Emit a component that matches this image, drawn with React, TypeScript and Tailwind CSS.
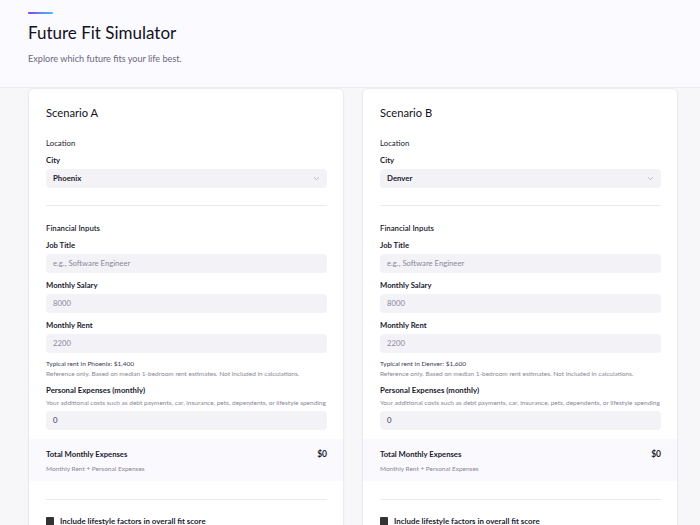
import React from "react";

function Field({ label, value, placeholder }: { label: string; value?: string; placeholder?: string }) {
  return (
    <div className="flex flex-col">
      <div className="text-[7.7px] font-bold text-[#1a1a2e] leading-[10px]">{label}</div>
      <div className="mt-[4px] h-[19px] rounded-[4px] bg-[#f3f2f7] flex items-center px-[7px] text-[7.7px] text-[#8a8798]">
        {value ?? placeholder}
      </div>
    </div>
  );
}

function Scenario({ name, city, rent }: { name: string; city: string; rent: string }) {
  return (
    <div className="bg-white rounded-[6px] border border-[#ebeaf0] shadow-[0_1px_2px_rgba(0,0,0,0.03)] overflow-hidden">
      <div className="pl-[17px] pr-[16px] pt-[16px]">
        <div className="text-[11.2px] font-normal text-[#111122] leading-[16px]">{name}</div>
        <div className="mt-[17px] text-[7.8px] text-[#1a1a2e] leading-[10px]">Location</div>
        <div className="mt-[7px] text-[7.8px] font-bold text-[#1a1a2e] leading-[10px]">City</div>
        <div className="mt-[4px] h-[19px] rounded-[4px] bg-[#f3f2f7] flex items-center justify-between px-[7px]">
          <span className="text-[7.8px] font-bold text-[#1a1a2e]">{city}</span>
          <svg width="7" height="5" viewBox="0 0 7 5" fill="none">
            <path d="M1 1.2 L3.5 3.6 L6 1.2" stroke="#b8b6c2" strokeWidth="0.9" />
          </svg>
        </div>
        <div className="mt-[17px] h-px bg-[#eceaf1]" />
        <div className="mt-[17px] text-[7.8px] font-semibold text-[#1a1a2e] leading-[10px]">Financial Inputs</div>
        <div className="mt-[7px] flex flex-col gap-[7px]">
          <Field label="Job Title" placeholder="e.g., Software Engineer" />
          <Field label="Monthly Salary" value="8000" />
          <Field label="Monthly Rent" value="2200" />
        </div>
        <div className="mt-[6px] text-[6.5px] text-[#3b3950] leading-[10px]">
          Typical rent in {city}: {rent}
        </div>
        <div className="text-[6.5px] text-[#8a8798] leading-[10px] whitespace-nowrap">
          Reference only. Based on median 1-bedroom rent estimates. Not included in calculations.
        </div>
        <div className="mt-[5px] text-[7.8px] font-bold text-[#1a1a2e] leading-[12px]">Personal Expenses (monthly)</div>
        <div className="mt-[2px] text-[6.5px] text-[#8a8798] leading-[10px] whitespace-nowrap">
          Your additional costs such as debt payments, car, insurance, pets, dependents, or lifestyle spending
        </div>
        <div className="mt-[3px] h-[19px] rounded-[4px] bg-[#f3f2f7] flex items-center px-[7px] text-[7.7px] text-[#3b3950]">
          0
        </div>
      </div>
      <div className="mt-[9px] bg-[#faf9fd] pl-[17px] pr-[16px] pt-[9px] pb-[7px]">
        <div className="flex justify-between items-center">
          <span className="text-[7.7px] font-bold text-[#1a1a2e] leading-[12px]">Total Monthly Expenses</span>
          <span className="text-[8.5px] font-bold text-[#1a1a2e] leading-[12px]">$0</span>
        </div>
        <div className="mt-[4px] text-[6.5px] text-[#8a8798] leading-[10px]">Monthly Rent + Personal Expenses</div>
      </div>
      <div className="pl-[17px] pr-[16px]">
        <div className="mt-[18px] h-px bg-[#eceaf1]" />
        <div className="mt-[15px] flex items-center gap-[6px] pb-[20px]">
          <div className="w-[8px] h-[9px] rounded-[1px] bg-[#333333]" />
          <span className="text-[7.9px] font-bold text-[#1a1a2e] leading-[12px]">Include lifestyle factors in overall fit score</span>
        </div>
      </div>
    </div>
  );
}

export default function App() {
  return (
    <div
      className="h-[525px] bg-[#f7f7fa] overflow-hidden"
      style={{ fontFamily: 'Lato, "Open Sans", sans-serif' }}
    >
      <div className="bg-[#fbfafe] border-b border-[#ebeaf0] px-[28px] pt-[12px] h-[88px]">
        <div className="w-[25px] h-[2px] rounded-full bg-gradient-to-r from-[#7c3aed] to-[#38bdf8]" />
        <h1 className="mt-[7px] text-[17px] font-normal text-[#111122] leading-[24px]">Future Fit Simulator</h1>
        <p className="mt-[8px] text-[9.1px] text-[#6b6880] leading-[12px]">Explore which future fits your life best.</p>
      </div>
      <div className="pl-[28px] grid grid-cols-[316px_316px] gap-[18px]">
        <Scenario name="Scenario A" city="Phoenix" rent="$1,400" />
        <Scenario name="Scenario B" city="Denver" rent="$1,600" />
      </div>
    </div>
  );
}
